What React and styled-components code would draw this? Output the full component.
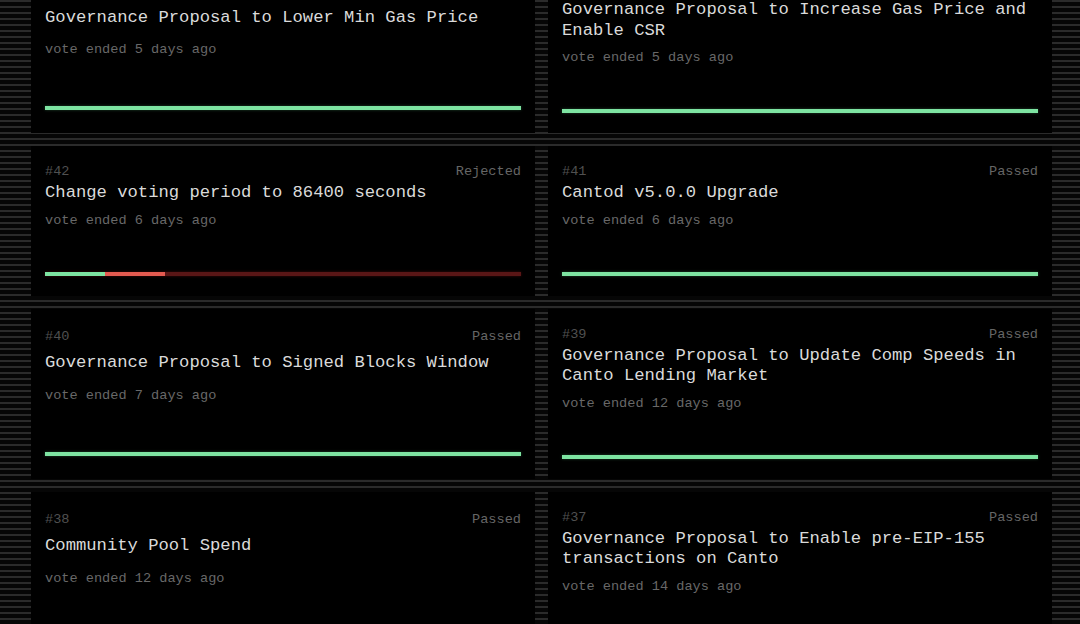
import React from "react";
import styled, { createGlobalStyle } from "styled-components";

const Global = createGlobalStyle`
  html, body {
    margin: 0;
    padding: 0;
    overflow: hidden;
    height: 100%;
  }
  body {
    background-color: #060606;
    background-image: repeating-linear-gradient(
      to bottom,
      #2b2b2b 0px,
      #2b2b2b 2px,
      #060606 2px,
      #060606 6px
    );
    font-family: "Liberation Mono", "DejaVu Sans Mono", monospace;
  }
`;

const Grid = styled.main`
  display: grid;
  grid-template-columns: 1fr 1fr;
  column-gap: 13px;
  row-gap: 13px;
  padding: 0 28px 0 31px;
  margin-top: -37px;
`;

const Card = styled.article`
  background: #000;
  display: flex;
  flex-direction: column;
  justify-content: space-around;
  padding: 18px 14px 20px;
  min-width: 0;
`;

const Head = styled.div`
  display: flex;
  justify-content: space-between;
  align-items: center;
  font-size: 13.6px;
  line-height: 16px;
`;

const Num = styled.span`
  color: #505050;
`;

const Status = styled.span`
  color: #666666;
`;

const Title = styled.h3`
  margin: 3px 0 0;
  font-size: 17.2px;
  line-height: 20.5px;
  font-weight: 400;
  color: #dadada;
`;

const Ended = styled.div`
  margin-top: 9px;
  font-size: 13.6px;
  line-height: 16px;
  color: #686868;
`;

const Bar = styled.div`
  margin-top: 43px;
  height: 4px;
  display: flex;
  background: ${(p) => (p.$track === "red" ? "#5a1616" : "#7de3a1")};
  box-shadow: 0 0 3px ${(p) => (p.$track === "red" ? "rgba(120,20,20,0.5)" : "rgba(90,200,130,0.35)")};
`;

const Seg = styled.div`
  height: 100%;
  background: ${(p) => p.$color};
`;

const proposals = [
  { id: 44, status: "Passed", title: "Governance Proposal to Lower Min Gas Price", days: 5 },
  { id: 43, status: "Passed", title: "Governance Proposal to Increase Gas Price and Enable CSR", days: 5 },
  {
    id: 42,
    status: "Rejected",
    title: "Change voting period to 86400 seconds",
    days: 6,
    segs: [
      { w: 12.6, c: "#7de3a1" },
      { w: 12.6, c: "#e45a50" },
    ],
  },
  { id: 41, status: "Passed", title: "Cantod v5.0.0 Upgrade", days: 6 },
  { id: 40, status: "Passed", title: "Governance Proposal to Signed Blocks Window", days: 7 },
  { id: 39, status: "Passed", title: "Governance Proposal to Update Comp Speeds in Canto Lending Market", days: 12 },
  { id: 38, status: "Passed", title: "Community Pool Spend", days: 12 },
  { id: 37, status: "Passed", title: "Governance Proposal to Enable pre-EIP-155 transactions on Canto", days: 14 },
];

export default function App() {
  return (
    <>
      <Global />
      <Grid>
        {proposals.map((p) => (
          <Card key={p.id}>
            <Head>
              <Num>#{p.id}</Num>
              <Status>{p.status}</Status>
            </Head>
            <Title>{p.title}</Title>
            <Ended>vote ended {p.days} days ago</Ended>
            <Bar $track={p.segs ? "red" : "green"}>
              {p.segs &&
                p.segs.map((s, i) => (
                  <Seg key={i} $color={s.c} style={{ width: `${s.w}%` }} />
                ))}
            </Bar>
          </Card>
        ))}
      </Grid>
    </>
  );
}
